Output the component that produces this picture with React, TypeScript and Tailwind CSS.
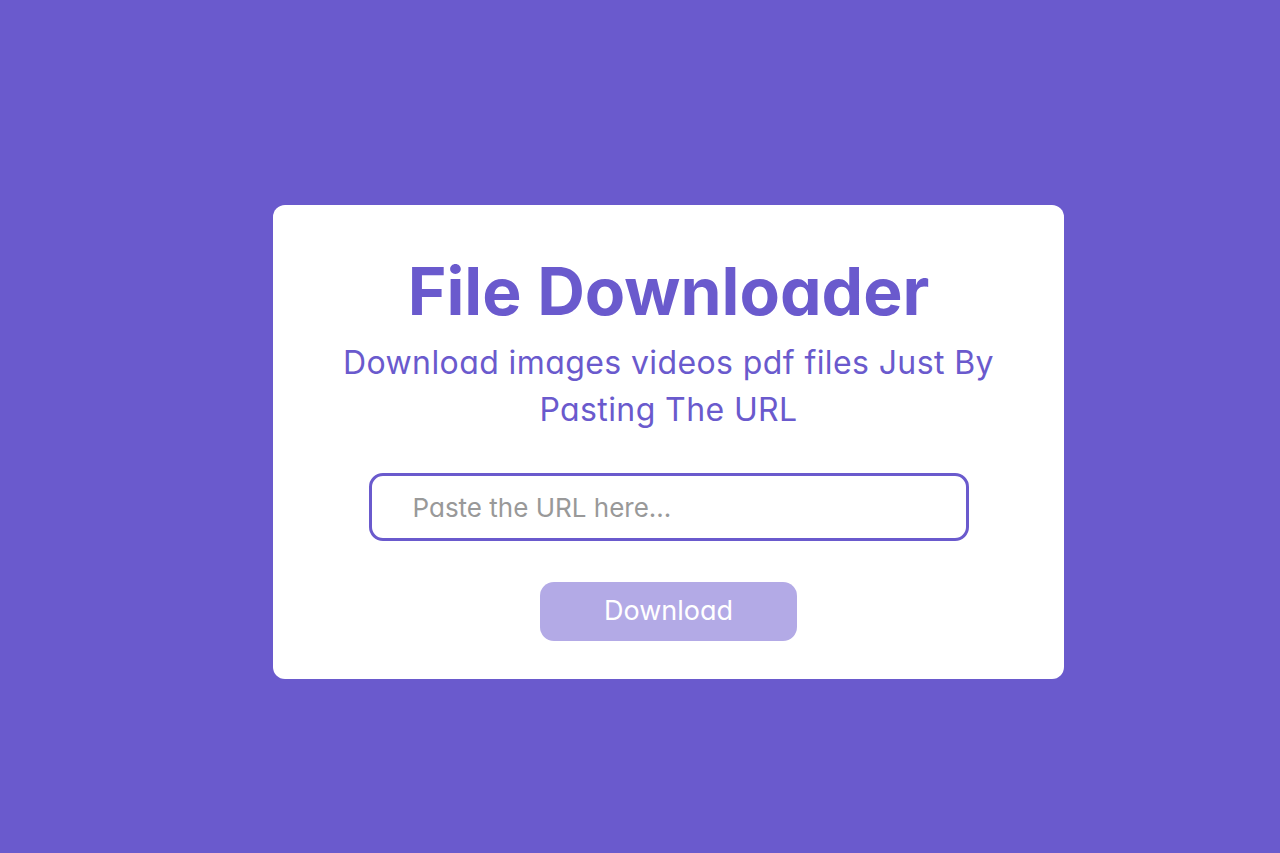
import { useState } from 'react'

export default function App() {
  const [url, setUrl] = useState('')

  return (
    <div
      className="min-h-screen w-full bg-[#6a5acd] pt-[205px] pl-[273px]"
      style={{ fontFamily: 'Inter, "Noto Sans", sans-serif' }}
    >
      {/* Card */}
      <div className="w-[791px] h-[474px] bg-white rounded-[12px] flex flex-col items-center pt-[48px] [font-feature-settings:'cv11']">
        <h1 className="text-[66px] leading-[76px] font-bold text-[#6a5acd]">
          File Downloader
        </h1>
        <p className="mt-[10px] w-[700px] text-center text-[32px] leading-[47px] tracking-[0.4px] text-[#6a5acd]">
          Download images videos pdf files Just By Pasting The URL
        </p>
        <input
          type="text"
          value={url}
          onChange={(e) => setUrl(e.target.value)}
          placeholder="Paste the URL here..."
          className="mt-[40px] w-[600px] h-[68px] rounded-[14px] border-[3px] border-[#6a5acd] px-[41px] text-[26px] text-gray-700 placeholder:text-[#999] outline-none"
        />
        <button
          disabled={!url.trim()}
          className="mt-[41px] w-[257px] h-[59px] rounded-[14px] bg-[#b3aae6] text-white text-[27px]"
        >
          Download
        </button>
      </div>
    </div>
  )
}
